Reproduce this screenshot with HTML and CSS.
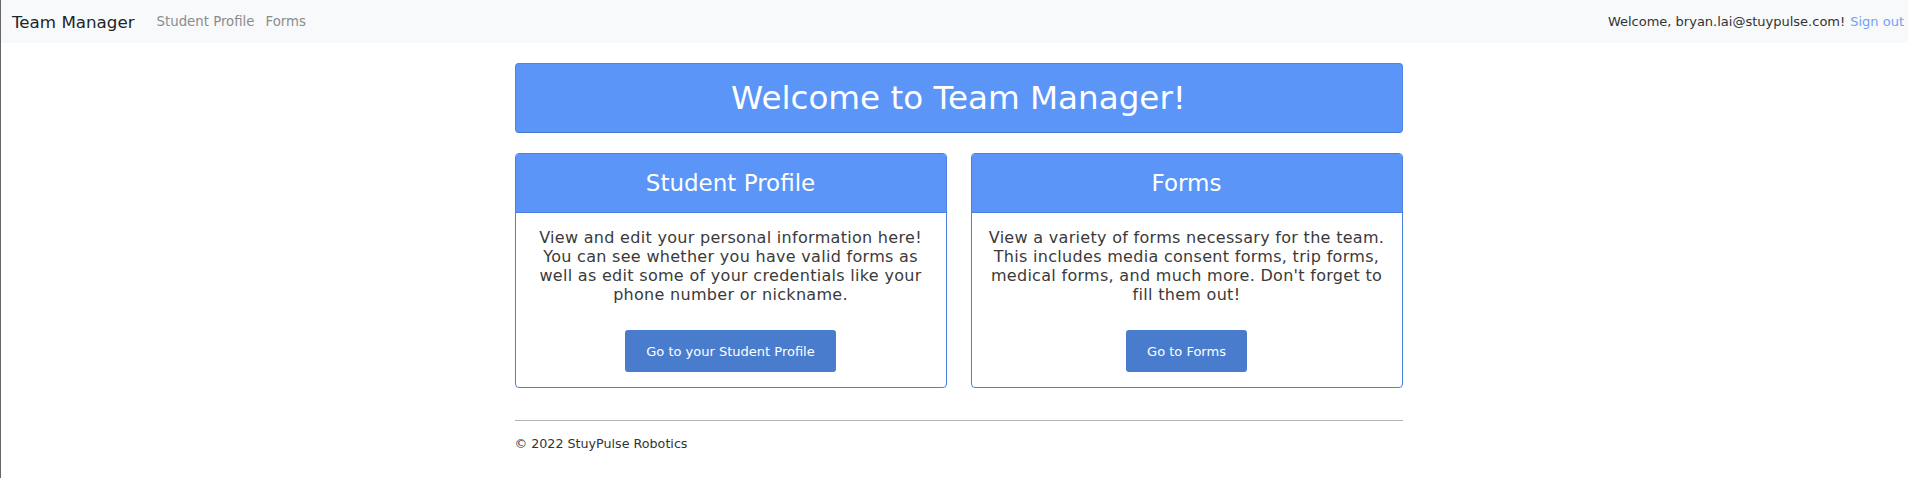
FILE: index.html
```html
<!DOCTYPE html>
<html lang="en">
<head>
<meta charset="utf-8">
<title>Team Manager</title>
<link rel="stylesheet" href="styles.css">
</head>
<body>
<nav class="navbar">
  <div class="nav-left">
    <a class="brand" href="#">Team Manager</a>
    <a class="nav-link" href="#">Student Profile</a>
    <a class="nav-link" href="#">Forms</a>
  </div>
  <div class="nav-right">
    <span class="welcome">Welcome, bryan.lai@stuypulse.com!</span>
    <a class="signout" href="#">Sign out</a>
  </div>
</nav>
<main class="page">
  <div class="container">
    <div class="hero"><h1>Welcome to Team Manager!</h1></div>
    <div class="cards">
      <section class="card">
        <div class="card-header"><h2>Student Profile</h2></div>
        <div class="card-body">
          <p>View and edit your personal information here!<br>You can see whether you have valid forms as<br>well as edit some of your credentials like your<br>phone number or nickname.</p>
          <a class="btn" href="#">Go to your Student Profile</a>
        </div>
      </section>
      <section class="card">
        <div class="card-header"><h2>Forms</h2></div>
        <div class="card-body">
          <p>View a variety of forms necessary for the team.<br>This includes media consent forms, trip forms,<br>medical forms, and much more. Don't forget to<br>fill them out!</p>
          <a class="btn" href="#">Go to Forms</a>
        </div>
      </section>
    </div>
    <footer class="footer">
      <p>&copy; 2022 StuyPulse Robotics</p>
    </footer>
  </div>
</main>
</body>
</html>
```
FILE: styles.css
```css
* { box-sizing: border-box; }
html, body { margin: 0; padding: 0; }
body {
  font-family: "DejaVu Sans", "Open Sans", sans-serif;
  color: #333;
  background: #fff;
  border-left: 1px solid #666;
  min-height: 478px;
}
a { text-decoration: none; }

.navbar {
  height: 43px;
  background: #f8f9fa;
  display: flex;
  align-items: center;
  justify-content: space-between;
  padding: 0 4px 0 11px;
}
.nav-left { display: flex; align-items: center; }
.brand {
  font-size: 16.7px;
  color: #212529;
  margin-right: 22px;
}
.nav-link {
  font-size: 13.3px;
  color: #8c8c8c;
  margin-right: 11px;
}
.nav-right { font-size: 13px; display: flex; gap: 5px; }
.welcome { color: #333; }
.signout { color: #72a0f7; }

.page {
  display: flex;
  justify-content: center;
  padding-left: 8px;
}
.container {
  width: 888px;
  padding-top: 20px;
}
.hero {
  height: 70px;
  background: #5a95f7;
  border: 1px solid #4d87e6;
  border-bottom-color: #4578d0;
  border-radius: 4px;
  display: flex;
  align-items: center;
  justify-content: center;
}
.hero h1 {
  margin: 0;
  font-size: 32.6px;
  font-weight: 400;
  color: #fff;
}
.cards {
  display: grid;
  grid-template-columns: 1fr 1fr;
  gap: 24px;
  margin-top: 20px;
}
.card {
  border: 1px solid #4a80e0;
  border-radius: 4px;
  overflow: hidden;
  display: flex;
  flex-direction: column;
}
.card-header {
  height: 59px;
  background: #5a95f7;
  border-bottom: 1px solid #4a80e0;
  display: flex;
  align-items: center;
  justify-content: center;
}
.card-header h2 {
  margin: 0;
  font-size: 23px;
  font-weight: 400;
  color: #fff;
}
.card-body {
  padding: 15px 6px 15px;
  display: flex;
  flex-direction: column;
  align-items: center;
  text-align: center;
}
.card-body p {
  margin: 0;
  font-size: 16px;
  letter-spacing: 0.3px;
  line-height: 19px;
  color: #3a3a3a;
}
.btn {
  margin-top: 26px;
  height: 42px;
  padding: 0 21px;
  display: flex;
  align-items: center;
  background: #4a7cce;
  color: #fff;
  font-size: 13px;
  border-radius: 3px;
}
.footer {
  margin-top: 32px;
  border-top: 1px solid #b5b5b5;
}
.footer p {
  margin: 15px 0 0;
  font-size: 12.7px;
  color: #333;
}
```
